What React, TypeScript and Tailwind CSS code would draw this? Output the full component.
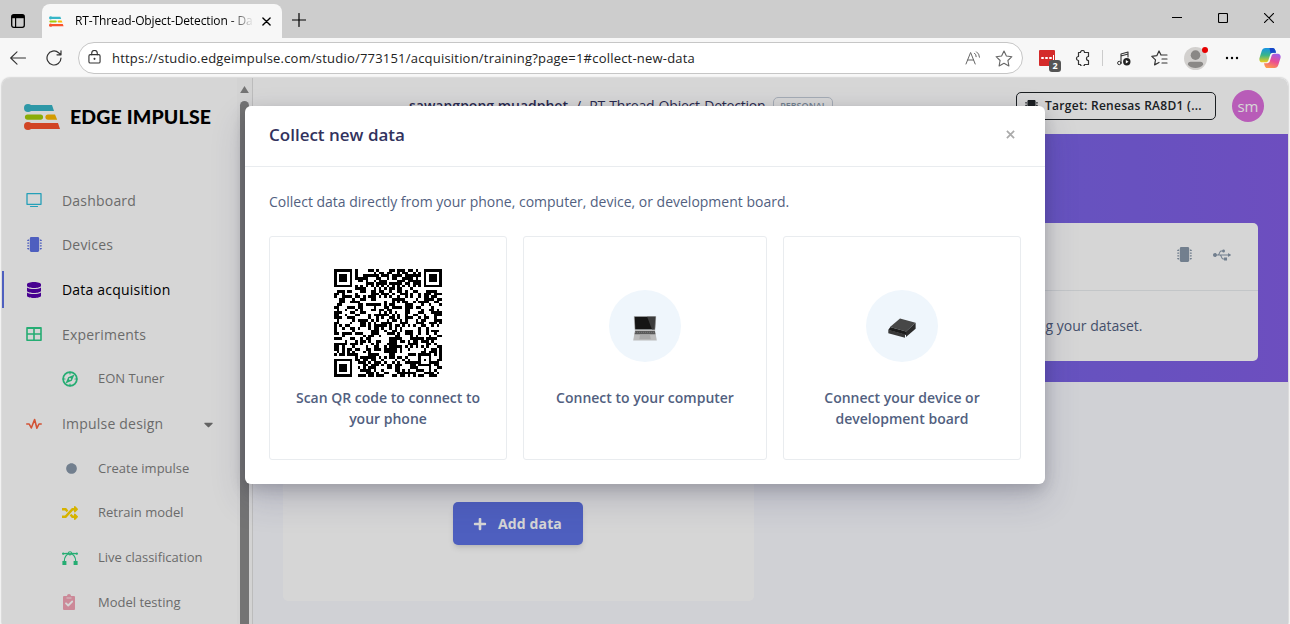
import React from "react";
import { FaMicrochip, FaDatabase, FaRandom, FaCircle, FaPlus, FaCaretDown } from "react-icons/fa";
import { FaUsb } from "react-icons/fa";

const N = 41;

function qrPath(): string {
  let seed = 773151;
  const rnd = () => {
    seed = (seed * 1103515245 + 12345) % 2147483648;
    return seed / 2147483648;
  };
  const finder = (x: number, y: number, ox: number, oy: number): boolean | null => {
    const i = x - ox;
    const j = y - oy;
    if (i < -1 || j < -1 || i > 7 || j > 7) return null;
    const d = Math.max(Math.abs(i - 3), Math.abs(j - 3));
    return d === 3 || d <= 1;
  };
  let d = "";
  for (let y = 0; y < N; y++) {
    for (let x = 0; x < N; x++) {
      let on = rnd() < 0.51;
      if (x === 6) on = y % 2 === 0;
      if (y === 6) on = x % 2 === 0;
      const a = Math.max(Math.abs(x - 34), Math.abs(y - 34));
      if (a <= 2) on = a !== 1;
      for (const [ox, oy] of [[0, 0], [N - 7, 0], [0, N - 7]]) {
        const f = finder(x, y, ox, oy);
        if (f !== null) on = f;
      }
      if (on) d += `M${x} ${y}h1v1h-1z`;
    }
  }
  return d;
}
const QR = qrPath();

function EdgeMark({ className }: { className: string }) {
  return (
    <svg viewBox="0 0 37 26" className={className}>
      <circle cx="4" cy="4" r="4" fill="#37b6c8" />
      <path d="M4 1h24l2 6H4z" fill="#37b6c8" />
      <path d="M3.500 10.500h13a2.600 2.600 0 0 1 0 5.200h-13a2.600 2.600 0 0 1 0-5.200z" fill="#a5cd0a" />
      <path d="M24 10.500h7l2.200 5.200H24a2.600 2.600 0 0 1 0-5.200z" fill="#fcb900" />
      <circle cx="4" cy="22" r="4" fill="#f9532d" />
      <path d="M4 19h30l2 6H4z" fill="#f9532d" />
    </svg>
  );
}

const line = { fill: "none", stroke: "currentColor", strokeLinecap: "round" as const, strokeLinejoin: "round" as const };

function TabBar() {
  return (
    <div className="flex h-[38px] items-end bg-[#cdcdcd] text-black">
      <div className="flex h-[38px] w-[42px] items-center pl-[11px]">
        <svg viewBox="0 0 14 14" className="mt-[3px] h-[14px] w-[14px]">
          <rect x=".7" y=".7" width="12.600" height="12.600" rx="2" {...line} strokeWidth="1.300" />
          <path d="M1 1h12v3.200H1z" />
          <path d="M4.600 3v10" {...line} strokeWidth="1.200" />
        </svg>
      </div>
      <div className="flex h-[34px] w-[240px] items-center rounded-t-lg bg-[#f7f7f7] pl-[7px]">
        <EdgeMark className="h-[11px] w-[15px]" />
        <div className="ml-[11px] w-[179px] whitespace-nowrap text-[12px] tracking-[-0.120px] [mask-image:linear-gradient(90deg,#000_86%,transparent)]">
          RT-Thread-Object-Detection - Da
        </div>
        <svg viewBox="0 0 10 10" className="ml-[8px] h-[9px] w-[9px]">
          <path d="M1 1l8 8M9 1l-8 8" {...line} strokeWidth="1.500" />
        </svg>
      </div>
      <svg viewBox="0 0 14 14" className="mb-[11px] ml-[10px] h-[14px] w-[14px]">
        <path d="M7 .5v13M.5 7h13" {...line} strokeWidth="1.200" />
      </svg>
      <div className="mb-[15px] ml-auto flex items-center pr-[16px]">
        <svg viewBox="0 0 10 10" className="h-[10px] w-[10px]"><path d="M0 4.500h10" {...line} /></svg>
        <svg viewBox="0 0 10 10" className="ml-[36px] h-[10px] w-[10px]"><rect x=".5" y=".5" width="9" height="9" rx="1" {...line} strokeWidth="1.100" /></svg>
        <svg viewBox="0 0 10 10" className="ml-[36px] h-[10px] w-[10px]"><path d="M.3 .3l9.400 9.400M9.700 .3l-9.400 9.400" {...line} strokeWidth="1.100" /></svg>
      </div>
    </div>
  );
}

function CopilotLogo() {
  return (
    <svg viewBox="0 0 22 20" className="ml-[20px] h-[20px] w-[22px]">
      <defs>
        <linearGradient id="cl" x1="0" y1="0" x2="0" y2="1">
          <stop offset="0" stopColor="#1894e6" />
          <stop offset=".5" stopColor="#38b58a" />
          <stop offset="1" stopColor="#f1cd19" />
        </linearGradient>
        <linearGradient id="cr" x1=".7" y1="0" x2=".3" y2="1">
          <stop offset="0" stopColor="#a05be8" />
          <stop offset=".5" stopColor="#ea4d93" />
          <stop offset="1" stopColor="#ff9a4a" />
        </linearGradient>
      </defs>
      <path d="M6.500 0h7.200c1.500 0 2.300 1.300 2.700 2.600l.6 2.200h-3.200c-1.500 0-2.300.8-2.700 2.200L9.500 12c-.5 1.600-1.300 2.300-2.800 2.300H3.200C.8 14.300 0 12 .5 10L2.700 3C3.300 1.200 4.500 0 6.500 0z" fill="url(#cl)" />
      <path d="M10.500 0h3.200c1.500 0 2.300 1.300 2.700 2.600l.6 2.200h-3.200c-1 0-1.700.3-2.200 1z" fill="#1746c9" />
      <path d="M15.500 20H8.300c-1.500 0-2.300-1.300-2.700-2.600L5 15.200h3.200c1.500 0 2.300-.8 2.700-2.200L12.500 8c.5-1.600 1.300-2.300 2.800-2.300h3.500c2.400 0 3.200 2.300 2.700 4.300L19.300 17c-.6 1.800-1.800 3-3.800 3z" fill="url(#cr)" />
    </svg>
  );
}

function Toolbar() {
  return (
    <div className="flex h-[40px] items-center bg-[#f7f7f7] text-[#333]">
      <svg viewBox="0 0 16 14" className="ml-[10px] h-[14px] w-[16px]">
        <path d="M15.500 7H.8M7 .8L.7 7 7 13.200" {...line} strokeWidth="1.100" />
      </svg>
      <svg viewBox="0 0 16 16" className="ml-[20px] h-[16px] w-[16px]">
        <path d="M15 8A7 7 0 1 1 12.600 2.700L14.800 4.600M15 .8v4h-4" {...line} strokeWidth="1.200" />
      </svg>
      <div className="ml-[16px] flex h-8 w-[945px] items-center rounded-full border border-[#c6c6c6] bg-white pl-[9px] pr-[9px]">
        <svg viewBox="0 0 14 15" className="mt-[-2px] h-[14px] w-[13px]">
          <rect x="1" y="5" width="12" height="9" rx="1.500" {...line} strokeWidth="1.200" />
          <path d="M4 5V3.500a3 3 0 0 1 6 0V5" {...line} strokeWidth="1.200" />
          <circle cx="7" cy="9.500" r="1.100" fill="currentColor" />
        </svg>
        <div className="ml-[11px] whitespace-nowrap pt-[2px] text-[13px] tracking-[0.205px] text-[#222]">
          https://studio.edgeimpulse.com/studio/773151/acquisition/training?page=1#collect-new-data
        </div>
        <svg viewBox="0 0 16 14" className="ml-auto mr-[-1px] h-[14px] w-[16px] text-[#666]">
          <path d="M1 13L5.600 1.500 10.200 13M2.600 9h6M9.500 2.200a4 4 0 0 1 1.700 3.500M11.500 .8a6.500 6.500 0 0 1 3 5.400" {...line} />
        </svg>
        <svg viewBox="0 0 18 17" className="ml-[15px] h-[17px] w-[18px] text-[#666]">
          <path d="M9 1l2.400 5 5.500.7-4 3.800 1 5.400L9 13.300 4.100 15.900l1-5.400-4-3.800L6.600 6z" {...line} strokeWidth="1.100" />
        </svg>
      </div>
      <div className="relative ml-[16px] h-[16px] w-[16px] rounded-[1px] bg-[#d42a2a]">
        <div className="flex gap-[1px] pl-[2px] pt-[7px]">
          <i className="h-[2px] w-[3px] rounded-full bg-white" /><i className="h-[2px] w-[3px] rounded-full bg-white" /><i className="h-[2px] w-[3px] rounded-full bg-white" /><i className="-mt-[2px] h-[5px] w-px bg-white" />
        </div>
        <div className="absolute left-[10px] top-[10px] flex h-[12px] w-[12px] items-center justify-center rounded-[3px] bg-[#555] text-[9px] font-bold text-white">2</div>
      </div>
      <svg viewBox="0 0 15 16" className="ml-[20px] h-[16px] w-[15px]">
        <path d="M3.500 2.500h2a2 2 0 0 1 4 0h4v4a2 2 0 0 0 0 4v4h-4a2 2 0 0 1-4 0h-2v-4a2 2 0 1 1 0-4z" {...line} strokeWidth="1.200" />
      </svg>
      <div className="ml-[12px] h-4 w-px bg-[#ccc]" />
      <svg viewBox="0 0 14 15" className="ml-[14px] h-[15px] w-[14px]">
        <path d="M4 12V3l7-2v5M4 5l7-2" {...line} strokeWidth="1.100" />
        <circle cx="2.300" cy="12" r="1.700" {...line} />
        <circle cx="9.800" cy="10.700" r="3.700" fill="#222" />
        <path d="M8.800 9v3.400l2.800-1.700z" fill="#fff" />
      </svg>
      <svg viewBox="0 0 17 16" className="ml-[20px] h-[16px] w-[17px]">
        <path d="M10 5L8 1 5.800 5.700.8 6.400l3.700 3.500-.9 5L8 12.500M8 1l2 4h6M11 9h5M11 13h5" {...line} strokeWidth="1.200" />
      </svg>
      <div className="relative ml-[16px] flex h-[23px] w-[23px] items-center justify-center overflow-visible">
        <svg viewBox="0 0 24 24" className="h-[23px] w-[23px]">
          <circle cx="12" cy="12" r="12" fill="#d2d0ce" />
          <circle cx="12" cy="8.500" r="5" fill="#8a8886" />
          <path d="M4 18.500c0-2 1-3 3-3h10c2 0 3 1 3 3a11 11 0 0 1-16 0z" fill="#8a8886" />
        </svg>
        <div className="absolute -right-[1px] top-0 h-[6px] w-[6px] rounded-full bg-[#e60000]" />
      </div>
      <svg viewBox="0 0 14 4" className="ml-[18px] h-[4px] w-[14px]">
        <circle cx="2" cy="2" r="1.200" /><circle cx="7" cy="2" r="1.200" /><circle cx="12" cy="2" r="1.200" />
      </svg>
      <CopilotLogo />
    </div>
  );
}

const ic = "h-4 w-4 shrink-0";
const mainItems = [
  { label: "Dashboard", icon: <svg viewBox="0 0 16 16" className={`${ic} text-[#2dbfdc]`}><path d="M1 1.700h14v10.600H1z" {...line} strokeWidth="1.300" /><path d="M4.500 14.500h7" {...line} strokeWidth="1.200" /></svg> },
  { label: "Devices", icon: <FaMicrochip className="ml-px h-[15px] w-[15px] shrink-0 text-[#5e72e4]" /> },
  { label: "Data acquisition", active: true, icon: <FaDatabase className={`${ic} text-[#5603ad]`} /> },
  { label: "Experiments", icon: <svg viewBox="0 0 16 16" className={`${ic} text-[#2dce89]`}><path d="M1 1.800h14v12.400H1zM1 2.200h14M1 8h14M8 2v12" {...line} strokeWidth="1.600" /></svg> },
  { label: "EON Tuner", sub: true, icon: <svg viewBox="0 0 16 16" className={`${ic} text-[#2dce89]`}><circle cx="8" cy="8" r="6.900" {...line} strokeWidth="1.700" /><path d="M8 1v2M8 13v2M1 8h2M13 8h2" {...line} strokeWidth="1.200" /><path d="M12.500 3.500L9.800 9.800 3.500 12.500 6.200 6.200z" fill="currentColor" /><circle cx="8" cy="8" r="1.100" fill="#fff" /></svg> },
  { label: "Impulse design", caret: true, icon: <svg viewBox="0 0 16 16" className={`${ic} text-[#fb6340]`}><path d="M.8 8h2.400l2.100 4 3.300-8.500 2.300 8.700L13 8h2.200" {...line} strokeWidth="1.600" /></svg> },
  { label: "Create impulse", sub: true, icon: <span className="flex h-4 w-4 shrink-0 justify-end pt-[3px]"><FaCircle className="mr-px h-[11px] w-[11px] text-[#8898aa]" /></span> },
  { label: "Retrain model", sub: true, icon: <FaRandom className={`${ic} text-[#ffd600]`} /> },
  {
    label: "Live classification",
    sub: true,
    icon: (
      <svg viewBox="0 0 16 16" className={`${ic} text-[#2dce89]`}>
        <path d="M2.300 11.500C2.300 7 4.600 4.200 8 3.500c3.400.7 5.700 3.500 5.700 8M1 3.700l5.500-.4M15 3.700l-5.500-.4" {...line} strokeWidth="1.200" />
        <path d="M.4 11h4v4h-4zM11.600 11h4v4h-4z" fill="currentColor" />
        <circle cx="8" cy="3.300" r="1.600" {...line} strokeWidth="1.100" />
        <circle cx="1.200" cy="3.700" r="1.100" fill="currentColor" />
        <circle cx="14.800" cy="3.700" r="1.100" fill="currentColor" />
      </svg>
    ),
  },
  { label: "Model testing", sub: true, icon: <svg viewBox="0 0 16 16" className={`${ic} text-[#f3a4b5]`}><path d="M3 2h2.500a2 2 0 0 1 3 0H12a1 1 0 0 1 1 1v12a1 1 0 0 1-1 1H2a1 1 0 0 1-1-1V3a1 1 0 0 1 1-1z" fill="currentColor" /><circle cx="7" cy="2" r="2" fill="currentColor" /><path d="M4 9.300l2.200 2.200 4-4" {...line} stroke="#fff" strokeWidth="1.800" /><path d="M4.500 4h5" stroke="#fff" strokeWidth=".8" /></svg> },
];

function Sidebar() {
  return (
    <aside className="flex w-[251px] shrink-0 border-r border-[#e0e0e0] bg-white">
      <div className="w-[235px] shrink-0">
        <div className="flex h-[99.800px] items-start pl-[22px] pt-[26px]">
          <EdgeMark className="h-[26px] w-[37px]" />
          <div className="ml-[9px] whitespace-nowrap font-['Lato'] text-[19.500px] font-black leading-[26px] tracking-[0.150px] text-black">EDGE IMPULSE</div>
        </div>
        <nav>
          {mainItems.map((m) => (
            <div key={m.label} className="flex h-[44.700px] items-center">
              <div className={m.active ? "h-[37px] w-[2px] bg-[#5e72e4]" : "h-[37px] w-[2px]"} />
              <div className={m.sub ? "flex items-center pl-[58px]" : "flex items-center pl-[22px]"}>
                {m.icon}
                <span className={m.sub ? "ml-[20px] whitespace-nowrap text-[13px] text-[#7f7f7f]" : m.active ? "ml-[20px] whitespace-nowrap text-[14px] tracking-[0.200px] text-black" : "ml-[20px] w-[142px] whitespace-nowrap text-[14px] tracking-[0.200px] text-[#7f7f7f]"}>{m.label}</span>
              </div>
              {m.caret && <FaCaretDown className="mt-[2px] h-[15px] w-[9px] text-[#777]" />}
            </div>
          ))}
        </nav>
      </div>
      <div className="flex w-[15px] flex-col items-center bg-[#fcfcfc] pt-[8px]">
        <svg viewBox="0 0 10 8" className="h-[7px] w-[9px]"><path d="M5 0l5 8H0z" fill="#8b8b8b" /></svg>
        <div className="mt-[8px] w-[9px] flex-1 rounded-t-full bg-[#8b8b8b]" />
      </div>
    </aside>
  );
}

function Main() {
  return (
    <main className="flex min-w-0 flex-1 flex-col bg-[#f8f9fe]">
      <header className="flex h-[56px] shrink-0 items-center bg-white pl-[156px] pr-6 text-[14px] text-[#32325d]">
        <span className="mt-[-2px] whitespace-nowrap font-semibold">sawangpong muadphet</span>
        <span className="mx-[8px] mt-[-2px]">/</span>
        <span className="mt-[-2px] whitespace-nowrap tracking-[-0.210px]">RT-Thread-Object-Detection</span>
        <span className="ml-[8px] flex h-[18px] w-[60px] items-center justify-center rounded-[5px] border border-[#c5cdd8] text-[9px] font-semibold text-[#8898aa]">PERSONAL</span>
        <span className="ml-auto flex h-[28px] w-[200px] items-center rounded-[5px] border border-[#212529] pl-[8px] text-[12px] font-semibold text-[#212529]">
          <FaMicrochip className="mr-[7px] h-[13px] w-[13px]" />
          <span className="whitespace-nowrap tracking-[0.290px]">Target: Renesas RA8D1 (...</span>
        </span>
        <span className="ml-4 flex h-8 w-8 items-center justify-center rounded-full bg-[#dc6edc] text-[15px] text-white">sm</span>
      </header>
      <section className="flex h-[248px] shrink-0 justify-end bg-[linear-gradient(87deg,#5e72e4,#825ee4)] pr-[30px] pt-[89px]">
        <div className="h-[138px] w-[470px] rounded-[5px] bg-white">
          <div className="flex h-[68px] items-center justify-end border-b border-[#e9ecef] pr-[27px] text-[#8898aa]">
            <FaMicrochip className="mt-[-4px] h-[15px] w-[15px]" />
            <FaUsb className="ml-[21px] mt-[-4px] h-[18px] w-[18px]" />
          </div>
          <div className="flex h-[68px] items-center justify-end pr-[115.500px] text-[14px] text-[#525f7f]">Start building your dataset.</div>
        </div>
      </section>
      <section className="pl-[30px]">
        <div className="flex h-[219px] w-[471px] justify-center rounded-b-[5px] bg-white pr-[2px] pt-[120px]">
          <button className="flex h-[43px] w-[130px] items-center justify-center rounded-[5px] bg-[#5e72e4] text-[14px] font-bold text-white shadow-md">
            <FaPlus className="mr-[11px] h-[14px] w-[14px]" />
            <span className="tracking-[0.120px]">Add data</span>
          </button>
        </div>
      </section>
    </main>
  );
}

function Laptop() {
  return (
    <svg viewBox="0 0 24 25" className="h-[25px] w-[24px]">
      <path d="M1.200 .5h21.600L22 13.500H2z" fill="#151515" />
      <path d="M14 .5h8.600L22 13.500h-3z" fill="#3c3c3c" />
      <path d="M1.200 .3h21.600L22 14.300H2z" fill="none" stroke="#b5b5b5" strokeWidth=".5" />
      <path d="M2 14h20l1.800 10.500H.2z" fill="#bcbcbc" />
      <path d="M2.200 15h19.600l.6 3.200H1.600z" fill="#5a5a5a" />
      <path d="M2 16.300h20" stroke="#aaa" strokeWidth=".4" strokeDasharray="1 1" />
      <path d="M7 19h10l.8 4.200H6.300z" fill="#a8a8a8" />
    </svg>
  );
}

function Board() {
  return (
    <svg viewBox="0 0 28 20" className="h-[20px] w-[28px]">
      <path d="M12 .4L27.600 4.700 18 13.500 2 9z" fill="#474747" />
      <path d="M2 9l16 4.500V17L2 12.500z" fill="#1c1c1c" />
      <path d="M18 13.500l9.600-8.800v6L18 19z" fill="#2c2c2c" />
      <path d="M.3 11.800L17 16.200v3.500L.3 15.200z" fill="#383838" />
      <path d="M.3 11.800L2 9.500v3l15 3.700z" fill="#222" />
    </svg>
  );
}

function Modal() {
  const card = "flex h-[224px] flex-col items-center rounded-[3px] border border-[#e9ecef] bg-white text-center text-[14px] font-semibold leading-[21px] text-[#525f7f]";
  return (
    <div className="absolute left-[245px] top-[106px] flex h-[378px] w-[800px] flex-col rounded-[6px] bg-white shadow-[0_15px_35px_rgba(50,50,93,0.2),0_5px_15px_rgba(0,0,0,0.17)]">
      <div className="flex h-[61px] items-center justify-between border-b border-[#e9ecef] px-6">
        <h5 className="mt-[-3px] text-[17px] font-semibold text-[#32325d]">Collect new data</h5>
        <svg viewBox="0 0 10 10" className="mr-[6px] mt-[-3px] h-[9px] w-[9px] text-[#aaa]"><path d="M1 1l8 8M9 1l-8 8" {...line} strokeLinecap="butt" strokeWidth="1.900" /></svg>
      </div>
      <div className="px-6 pt-[24px]">
        <p className="whitespace-nowrap text-[14px] leading-[22px] text-[#525f7f]">Collect data directly from your phone, computer, device, or development board.</p>
        <div className="mt-[23px] grid grid-cols-[238px_244px_238px] gap-4">
          <div className={`${card} pt-[32px]`}>
            <svg viewBox="0 0 41 41" shapeRendering="crispEdges" className="h-[108px] w-[108px]"><path d={QR} fill="#000" /></svg>
            <span className="mt-[10px] w-[200px]">Scan QR code to connect to your phone</span>
          </div>
          <div className={`${card} pt-[53px]`}>
            <div className="flex h-[72px] w-[72px] items-center justify-center rounded-full bg-[#eff6fc] pt-[4px]"><Laptop /></div>
            <span className="mt-[25px]">Connect to your computer</span>
          </div>
          <div className={`${card} pt-[53px]`}>
            <div className="flex h-[72px] w-[72px] items-center justify-center rounded-full bg-[#eff6fc] pt-[4px]"><Board /></div>
            <span className="mt-[25px] w-[170px]">Connect your device or development board</span>
          </div>
        </div>
      </div>
    </div>
  );
}

export default function App() {
  return (
    <div className="relative flex h-[624px] w-[1290px] flex-col overflow-hidden bg-[#f7f7f7] font-['Open_Sans','Noto_Sans',sans-serif]">
      <TabBar />
      <Toolbar />
      <div className="relative mx-[2px] flex min-h-0 flex-1 overflow-hidden rounded-t-[8px] shadow-[0_0_2px_rgba(0,0,0,0.4)]">
        <Sidebar />
        <Main />
        <div className="absolute inset-0 bg-black/16" />
      </div>
      <Modal />
    </div>
  );
}
